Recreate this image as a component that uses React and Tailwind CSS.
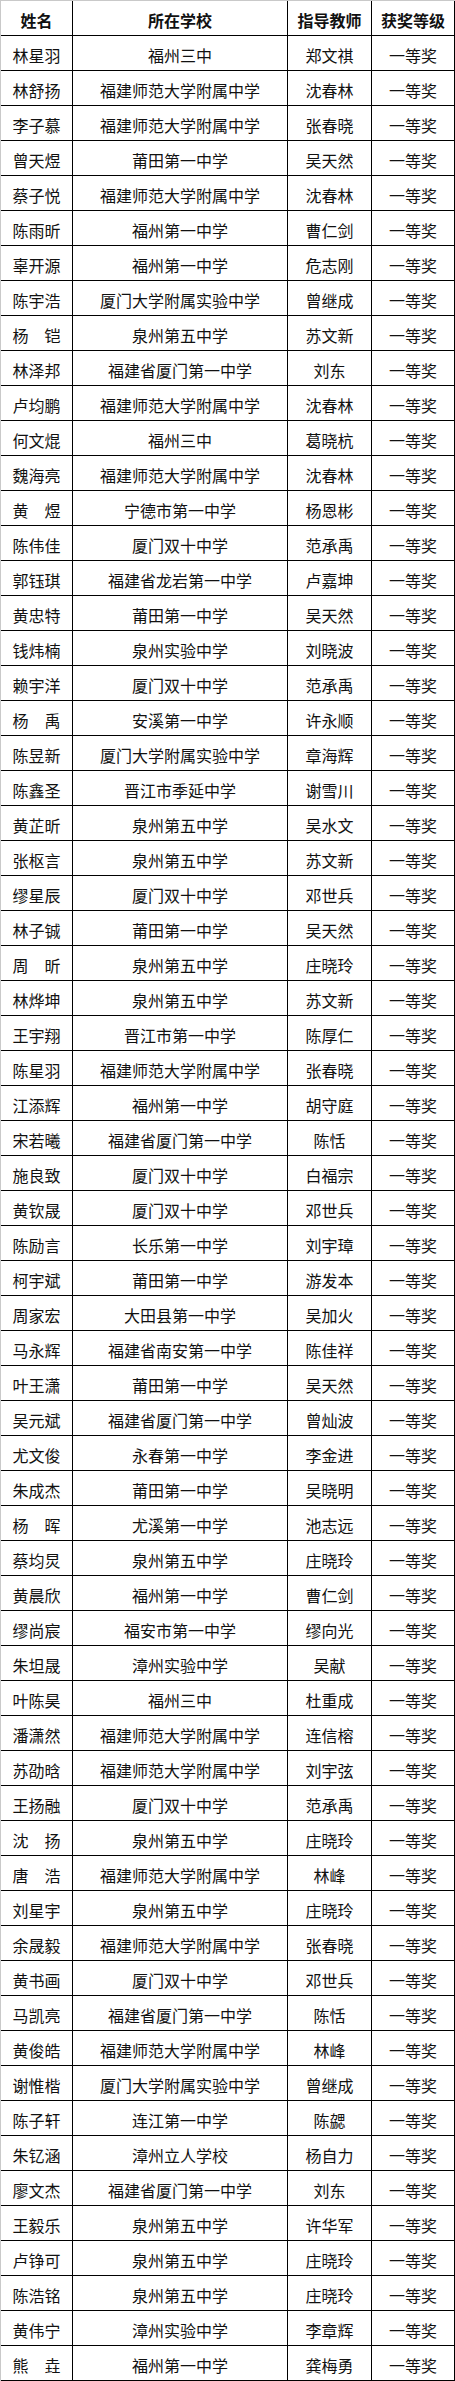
const ROWS = [
  ["林星羽", "福州三中", "郑文祺"],
  ["林舒扬", "福建师范大学附属中学", "沈春林"],
  ["李子慕", "福建师范大学附属中学", "张春晓"],
  ["曾天煜", "莆田第一中学", "吴天然"],
  ["蔡子悦", "福建师范大学附属中学", "沈春林"],
  ["陈雨昕", "福州第一中学", "曹仁剑"],
  ["辜开源", "福州第一中学", "危志刚"],
  ["陈宇浩", "厦门大学附属实验中学", "曾继成"],
  ["杨　铠", "泉州第五中学", "苏文新"],
  ["林泽邦", "福建省厦门第一中学", "刘东"],
  ["卢均鹏", "福建师范大学附属中学", "沈春林"],
  ["何文焜", "福州三中", "葛晓杭"],
  ["魏海亮", "福建师范大学附属中学", "沈春林"],
  ["黄　煜", "宁德市第一中学", "杨恩彬"],
  ["陈伟佳", "厦门双十中学", "范承禹"],
  ["郭钰琪", "福建省龙岩第一中学", "卢嘉坤"],
  ["黄忠特", "莆田第一中学", "吴天然"],
  ["钱炜楠", "泉州实验中学", "刘晓波"],
  ["赖宇洋", "厦门双十中学", "范承禹"],
  ["杨　禹", "安溪第一中学", "许永顺"],
  ["陈昱新", "厦门大学附属实验中学", "章海辉"],
  ["陈鑫圣", "晋江市季延中学", "谢雪川"],
  ["黄芷昕", "泉州第五中学", "吴水文"],
  ["张枢言", "泉州第五中学", "苏文新"],
  ["缪星辰", "厦门双十中学", "邓世兵"],
  ["林子铖", "莆田第一中学", "吴天然"],
  ["周　昕", "泉州第五中学", "庄晓玲"],
  ["林烨坤", "泉州第五中学", "苏文新"],
  ["王宇翔", "晋江市第一中学", "陈厚仁"],
  ["陈星羽", "福建师范大学附属中学", "张春晓"],
  ["江添辉", "福州第一中学", "胡守庭"],
  ["宋若曦", "福建省厦门第一中学", "陈恬"],
  ["施良致", "厦门双十中学", "白福宗"],
  ["黄钦晟", "厦门双十中学", "邓世兵"],
  ["陈励言", "长乐第一中学", "刘宇璋"],
  ["柯宇斌", "莆田第一中学", "游发本"],
  ["周家宏", "大田县第一中学", "吴加火"],
  ["马永辉", "福建省南安第一中学", "陈佳祥"],
  ["叶王潇", "莆田第一中学", "吴天然"],
  ["吴元斌", "福建省厦门第一中学", "曾灿波"],
  ["尤文俊", "永春第一中学", "李金进"],
  ["朱成杰", "莆田第一中学", "吴晓明"],
  ["杨　晖", "尤溪第一中学", "池志远"],
  ["蔡均炅", "泉州第五中学", "庄晓玲"],
  ["黄晨欣", "福州第一中学", "曹仁剑"],
  ["缪尚宸", "福安市第一中学", "缪向光"],
  ["朱坦晟", "漳州实验中学", "吴献"],
  ["叶陈昊", "福州三中", "杜重成"],
  ["潘潇然", "福建师范大学附属中学", "连信榕"],
  ["苏劭晗", "福建师范大学附属中学", "刘宇弦"],
  ["王扬融", "厦门双十中学", "范承禹"],
  ["沈　扬", "泉州第五中学", "庄晓玲"],
  ["唐　浩", "福建师范大学附属中学", "林峰"],
  ["刘星宇", "泉州第五中学", "庄晓玲"],
  ["余晟毅", "福建师范大学附属中学", "张春晓"],
  ["黄书画", "厦门双十中学", "邓世兵"],
  ["马凯亮", "福建省厦门第一中学", "陈恬"],
  ["黄俊皓", "福建师范大学附属中学", "林峰"],
  ["谢惟楷", "厦门大学附属实验中学", "曾继成"],
  ["陈子轩", "连江第一中学", "陈勰"],
  ["朱钇涵", "漳州立人学校", "杨自力"],
  ["廖文杰", "福建省厦门第一中学", "刘东"],
  ["王毅乐", "泉州第五中学", "许华军"],
  ["卢铮可", "泉州第五中学", "庄晓玲"],
  ["陈浩铭", "泉州第五中学", "庄晓玲"],
  ["黄伟宁", "漳州实验中学", "李章辉"],
  ["熊　垚", "福州第一中学", "龚梅勇"],
];

const cell = "h-[35px] flex items-center justify-center border-r border-b border-black pt-[3px] whitespace-nowrap";

export default function App() {
  return (
    <div
      className="w-[455px] bg-white text-[16px] leading-none text-[#111] border-t border-l border-[#c9c9c9]"
      style={{ fontFamily: '"Noto Sans CJK SC", "Noto Sans", sans-serif' }}
    >
      <div className="grid grid-cols-[72px_215px_84px_83px]">
        <div className={cell + " font-bold"}>姓名</div>
        <div className={cell + " font-bold"}>所在学校</div>
        <div className={cell + " font-bold"}>指导教师</div>
        <div className={cell + " font-bold"}>获奖等级</div>
        {ROWS.map(([name, school, teacher], i) => (
          <div key={i} className="contents">
            <div className={cell}>{name}</div>
            <div className={cell}>{school}</div>
            <div className={cell}>{teacher}</div>
            <div className={cell}>一等奖</div>
          </div>
        ))}
      </div>
    </div>
  );
}
